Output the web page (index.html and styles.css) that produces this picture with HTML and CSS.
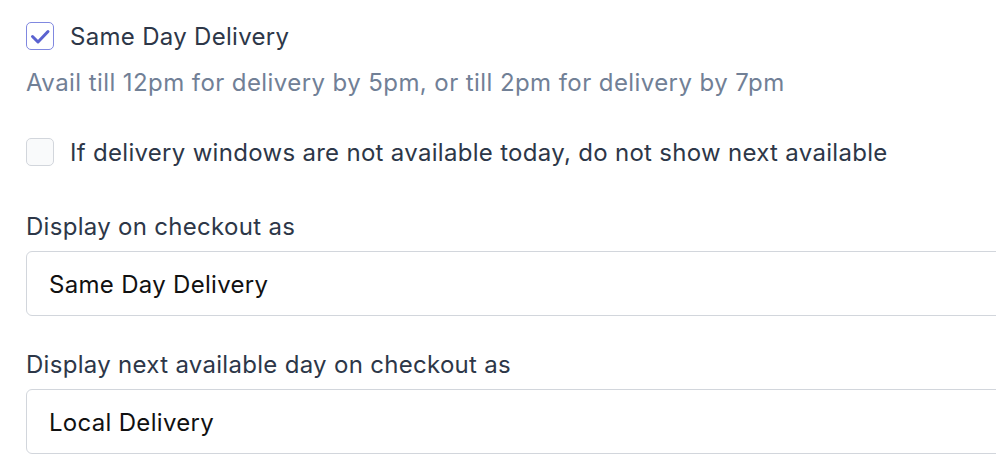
FILE: index.html
```html
<!DOCTYPE html>
<html lang="en">
<head>
    <meta charset="UTF-8">
    <title>Delivery settings</title>
    <link rel="stylesheet" href="styles.css">
</head>
<body>
    <div class="settings">
        <label class="check-row">
            <span class="box checked">
                <svg viewBox="0 0 26 26" width="26" height="26"><path d="M5.5 13.5l5.5 5.5 10-10.5" fill="none" stroke="#5a62d0" stroke-width="3" stroke-linecap="round" stroke-linejoin="round"/></svg>
            </span>
            <span class="check-text">Same Day Delivery</span>
        </label>
        <p class="help">Avail till 12pm for delivery by 5pm, or till 2pm for delivery by 7pm</p>

        <label class="check-row second">
            <span class="box"></span>
            <span class="check-text">If delivery windows are not available today, do not show next available</span>
        </label>

        <div class="field">
            <label class="field-label">Display on checkout as</label>
            <input type="text" class="text-input" value="Same Day Delivery">
        </div>

        <div class="field">
            <label class="field-label">Display next available day on checkout as</label>
            <input type="text" class="text-input" value="Local Delivery">
        </div>
    </div>
</body>
</html>
```

FILE: styles.css
```css
body {
    margin: 0;
    background-color: #fff;
    font-family: Inter, "Noto Sans", sans-serif;
    color: #2d3748;
    letter-spacing: 0.3px;
}

.settings {
    padding: 22px 0 0 26px;
}

.check-row {
    display: flex;
    align-items: center;
    gap: 16px;
    height: 28px;
    font-size: 24px;
}

.check-text {
    line-height: 26px;
    padding-top: 2px;
}

.check-row.second {
    margin-top: 39px;
}

.box {
    width: 26px;
    height: 26px;
    border: 1px solid #d2d6dc;
    border-radius: 5px;
    background-color: #f9fafb;
    display: flex;
    align-items: center;
    justify-content: center;
    flex-shrink: 0;
}

.box.checked {
    background-color: #fff;
    border-color: #8088e0;
}

.help {
    margin: 16px 0 0;
    padding-top: 1px;
    font-size: 24px;
    line-height: 32px;
    color: #718096;
    letter-spacing: 0.42px;
}

.field {
    margin-top: 44px;
}

.field-label {
    display: block;
    font-size: 24px;
    line-height: 32px;
    padding-top: 1px;
    margin-bottom: 8px;
}

.field + .field {
    margin-top: 32px;
}

.text-input {
    display: block;
    box-sizing: border-box;
    width: 1000px;
    height: 65px;
    padding: 2px 22px 0;
    border: 1px solid #d2d6dc;
    border-radius: 6px;
    font-family: inherit;
    font-size: 24px;
    letter-spacing: 0.3px;
    color: #111;
    background-color: #fff;
}
```
